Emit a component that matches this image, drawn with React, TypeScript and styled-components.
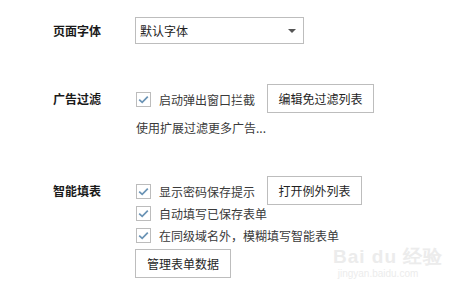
import React from "react";
import styled, { createGlobalStyle } from "styled-components";

const Global = createGlobalStyle`
  html, body { margin: 0; padding: 0; background: #ffffff; }
  body {
    font-family: "Noto Sans CJK SC", "Noto Sans", "Liberation Sans", sans-serif;
    font-size: 12px;
    color: #333;
  }
`;

const Page = styled.div`
  position: relative;
  width: 449px;
  height: 291px;
  box-sizing: border-box;
  padding: 17px 0 0 53px;
  overflow: hidden;
`;

const Section = styled.section<{ $top?: number }>`
  display: grid;
  grid-template-columns: 82px auto;
  align-items: start;
  margin-top: ${(p) => p.$top ?? 0}px;
`;

const Label = styled.div<{ $lh?: number }>`
  font-size: 12px;
  font-weight: 700;
  color: #1a1a1a;
  line-height: ${(p) => p.$lh ?? 22}px;
  white-space: nowrap;
`;

const Options = styled.div`
  display: flex;
  flex-direction: column;
`;

const Row = styled.div`
  display: flex;
  align-items: center;
  height: 22px;
  padding-left: 1px;
`;

const Select = styled.div`
  box-sizing: border-box;
  width: 169px;
  height: 27px;
  border: 1px solid #bdbdbd;
  display: flex;
  align-items: center;
  justify-content: space-between;
  padding: 0 7px 0 4px;
  color: #222;
  font-size: 12px;
`;

const Arrow = styled.span`
  width: 0;
  height: 0;
  border-left: 4px solid transparent;
  border-right: 4px solid transparent;
  border-top: 4px solid #555;
  margin-top: 1px;
`;

const Box = styled.span`
  box-sizing: border-box;
  width: 15px;
  height: 15px;
  border: 1px solid #bcbcbc;
  background: #fff;
  display: inline-flex;
  align-items: center;
  justify-content: center;
  flex: none;
`;

const OptText = styled.span`
  margin-left: 8px;
  color: #3a3a3a;
  font-size: 12px;
  white-space: nowrap;
`;

const Button = styled.button<{ $w: number }>`
  box-sizing: border-box;
  width: ${(p) => p.$w}px;
  height: 29px;
  margin: -4px 0 -3px 12px;
  border: 1px solid #bdbdbd;
  background: #fff;
  font-family: inherit;
  font-size: 12px;
  color: #1f1f1f;
  padding: 0;
  flex: none;
`;

const BlockButton = styled(Button)`
  margin: 3px 0 0 0;
`;

const Hint = styled.div`
  margin-top: 7px;
  line-height: 22px;
  color: #3a3a3a;
  font-size: 12px;
  padding-left: 1px;
`;

const Watermark = styled.div`
  position: absolute;
  left: 333px;
  top: 246px;
  width: 90px;
  color: #ececec;
  font-family: "Liberation Sans", sans-serif;
  text-align: center;
  pointer-events: none;
`;

const WmTop = styled.div`
  font-size: 19px;
  font-weight: 700;
  line-height: 22px;
  letter-spacing: 1px;
  white-space: nowrap;
`;

const WmBottom = styled.div`
  font-size: 10px;
  line-height: 12px;
  white-space: nowrap;
`;

const Check = () => (
  <svg width="11" height="9" viewBox="0 0 11 9">
    <path d="M1.2 4.6 L4.2 7.4 L9.8 1.6" fill="none" stroke="#6a93b5" strokeWidth="1.7" />
  </svg>
);

const Option: React.FC<{ text: string; children?: React.ReactNode }> = ({ text, children }) => (
  <Row>
    <Box>
      <Check />
    </Box>
    <OptText>{text}</OptText>
    {children}
  </Row>
);

export default function App() {
  return (
    <Page>
      <Global />
      <Section>
        <Label $lh={27}>页面字体</Label>
        <Select>
          <span>默认字体</span>
          <Arrow />
        </Select>
      </Section>

      <Section $top={44}>
        <Label>广告过滤</Label>
        <Options>
          <Option text="启动弹出窗口拦截">
            <Button $w={107}>编辑免过滤列表</Button>
          </Option>
          <Hint>使用扩展过滤更多广告...</Hint>
        </Options>
      </Section>

      <Section $top={41}>
        <Label>智能填表</Label>
        <Options>
          <Option text="显示密码保存提示">
            <Button $w={95}>打开例外列表</Button>
          </Option>
          <Option text="自动填写已保存表单" />
          <Option text="在同级域名外，模糊填写智能表单" />
          <BlockButton $w={96}>管理表单数据</BlockButton>
        </Options>
      </Section>

      <Watermark>
        <WmTop>Bai du 经验</WmTop>
        <WmBottom>jingyan.baidu.com</WmBottom>
      </Watermark>
    </Page>
  );
}
